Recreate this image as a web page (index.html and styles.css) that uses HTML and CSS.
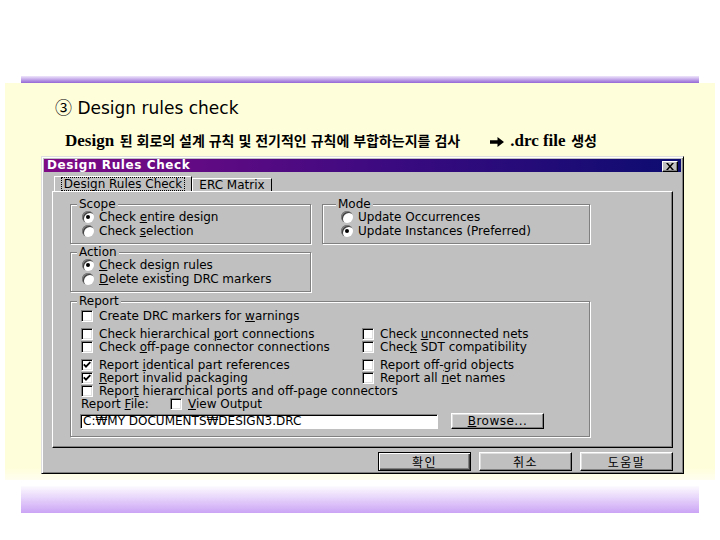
FILE: index.html
```html
<!DOCTYPE html>
<html lang="ko">
<head>
    <meta charset="UTF-8">
    <meta name="viewport" content="width=device-width, initial-scale=1.0">
    <title>Design rules check</title>
    <link rel="stylesheet" href="styles.css">
</head>
<body>
    <div class="top-bar"></div>

    <div class="slide">
        <h1 class="heading"><span class="num">③</span> Design rules check</h1>
        <p class="subtitle"><span class="en">Design</span> <span class="ko">된 회로의 설계 규칙 및 전기적인 규칙에 부합하는지를 검사</span><svg class="arrow" width="14" height="10" viewBox="0 0 14 10"><path d="M0 3.3h7.5V0L14 5l-6.5 5V6.7H0z" fill="#000"/></svg><span class="en">.drc file</span> <span class="ko">생성</span></p>

        <!-- Dialog -->
        <div class="dialog">
            <div class="titlebar">
                <span class="title">Design Rules Check</span>
                <span class="close-btn">
                    <svg width="8" height="7" viewBox="0 0 8 7"><path d="M0 0h2l2 2.4L6 0h2L5 3.5 8 7H6L4 4.6 2 7H0l3-3.5z" fill="#000"/></svg>
                </span>
            </div>

            <div class="tabs">
                <div class="tab active"><span class="focus">Design Rules Check</span></div>
                <div class="tab">ERC Matrix</div>
            </div>

            <div class="panel">
                <div class="top-row">
                    <div class="left-col">
                        <fieldset class="group scope">
                            <legend>Scope</legend>
                            <div class="opt"><span class="radio on"></span><span>Check <u>e</u>ntire design</span></div>
                            <div class="opt"><span class="radio"></span><span>Check <u>s</u>election</span></div>
                        </fieldset>
                        <fieldset class="group action">
                            <legend>Action</legend>
                            <div class="opt"><span class="radio on"></span><span><u>C</u>heck design rules</span></div>
                            <div class="opt"><span class="radio"></span><span><u>D</u>elete existing DRC markers</span></div>
                        </fieldset>
                    </div>
                    <fieldset class="group mode">
                        <legend>Mode</legend>
                        <div class="opt"><span class="radio"></span><span>Update Occurrences</span></div>
                        <div class="opt"><span class="radio on"></span><span>Update Instances (Preferred)</span></div>
                    </fieldset>
                </div>

                <fieldset class="group report">
                    <legend>Report</legend>
                    <div class="cb-row"><span class="check"></span><span>Create DRC markers for <u>w</u>arnings</span></div>

                    <div class="cb-grid">
                        <div class="cb-row"><span class="check"></span><span>Check hierarchical <u>p</u>ort connections</span></div>
                        <div class="cb-row"><span class="check"></span><span>Check <u>u</u>nconnected nets</span></div>
                        <div class="cb-row"><span class="check"></span><span>Check <u>o</u>ff-page connector connections</span></div>
                        <div class="cb-row"><span class="check"></span><span>Chec<u>k</u> SDT compatibility</span></div>
                    </div>

                    <div class="cb-grid">
                        <div class="cb-row"><span class="check on"><svg width="10" height="10" viewBox="0 0 10 10"><path d="M1.8 4.3l2.2 2.3 4.3-4.4" fill="none" stroke="#000" stroke-width="1.8"/></svg></span><span>Report <u>i</u>dentical part references</span></div>
                        <div class="cb-row"><span class="check"></span><span>Report off-<u>g</u>rid objects</span></div>
                        <div class="cb-row"><span class="check on"><svg width="10" height="10" viewBox="0 0 10 10"><path d="M1.8 4.3l2.2 2.3 4.3-4.4" fill="none" stroke="#000" stroke-width="1.8"/></svg></span><span><u>R</u>eport invalid packaging</span></div>
                        <div class="cb-row"><span class="check"></span><span>Report all <u>n</u>et names</span></div>
                    </div>

                    <div class="cb-row"><span class="check"></span><span>Repor<u>t</u> hierarchical ports and off-page connectors</span></div>

                    <div class="file-row">
                        <span class="file-label">Report <u>F</u>ile:</span>
                        <span class="check"></span><span><u>V</u>iew Output</span>
                    </div>

                    <div class="input-row">
                        <div class="text-input">C:₩MY DOCUMENTS₩DESIGN3.DRC</div>
                        <div class="btn browse"><span><u>B</u>rowse...</span></div>
                    </div>
                </fieldset>
            </div>

            <div class="buttons">
                <div class="btn default">확인</div>
                <div class="btn">취소</div>
                <div class="btn">도움말</div>
            </div>
        </div>
    </div>

    <div class="bottom-bar"></div>
</body>
</html>
```

FILE: styles.css
```css
* {
    box-sizing: border-box;
}

body {
    margin: 0;
    background: #fff;
    font-family: "DejaVu Sans", "Noto Sans CJK KR", sans-serif;
    color: #000;
}

/* slide decoration */
.top-bar {
    width: 678px;
    height: 7px;
    margin: 76px 0 0 21px;
    background: linear-gradient(#efe6fb, #9466d6);
}

.bottom-bar {
    width: 678px;
    height: 27px;
    margin: 6px 0 0 21px;
    background: linear-gradient(#fdfbff, #cba4f5);
}

.slide {
    margin: 0 5px;
    height: 397px;
    padding: 14px 0 0 36px;
    background: linear-gradient(#fffedb 97%, #fffef0);
}

.heading {
    margin: 0 0 0 14px;
    font-size: 17px;
    line-height: 20px;
    font-weight: normal;
}

.heading .num {
    font-family: "Noto Sans CJK KR", sans-serif;
}

.subtitle {
    margin: 12px 0 0 24px;
    line-height: 20px;
    font-weight: bold;
}

.subtitle .en {
    font-family: "Liberation Serif", serif;
    font-size: 17px;
}

.subtitle .ko {
    font-family: "Noto Sans CJK KR", sans-serif;
    font-size: 14px;
}

.subtitle .arrow {
    margin: 0 6px 0 30px;
    vertical-align: -1px;
}

/* dialog window */
.dialog {
    margin-top: 5px;
    width: 643px;
    padding: 2px;
    background: #c0c0c0;
    border: 1px solid;
    border-color: #dfdfdf #000 #000 #dfdfdf;
    box-shadow: inset 1px 1px 0 #fff, inset -1px -1px 0 #808080;
    font-size: 12px;
}

.titlebar {
    display: flex;
    align-items: center;
    justify-content: space-between;
    height: 13px;
    padding: 0 3px;
    background: linear-gradient(to right, #800a86, #3a0a80 55%, #0c0c70);
}

.titlebar .title {
    color: #fff;
    font-weight: bold;
    letter-spacing: 0.6px;
    line-height: 13px;
}

.close-btn {
    display: flex;
    align-items: center;
    justify-content: center;
    width: 16px;
    height: 11px;
    margin-top: 2px;
    background: #c0c0c0;
    border: 1px solid;
    border-color: #fff #000 #000 #fff;
    box-shadow: inset -1px -1px 0 #808080;
}

/* tabs */
.tabs {
    display: flex;
    align-items: flex-end;
    height: 15px;
    margin: 4px 8px 0;
    padding-left: 2px;
}

.tab {
    display: flex;
    align-items: center;
    justify-content: center;
    width: 80px;
    height: 13px;
    border-top: 1px solid #fff;
    border-left: 1px solid #fff;
    border-right: 1px solid #000;
    line-height: 12px;
}

.tab.active {
    width: 138px;
    height: 15px;
}

.tab .focus {
    padding: 0 2px;
    outline: 1px dotted #000;
}

.panel {
    margin: 0 8px;
    padding: 6px 0 10px 17px;
    border: 1px solid;
    border-color: #fff #000 #000 #fff;
    box-shadow: inset -1px -1px 0 #808080;
}

.top-row {
    display: flex;
    align-items: flex-start;
    gap: 11px;
}

.left-col {
    display: flex;
    flex-direction: column;
    gap: 2px;
    width: 241px;
}

/* group boxes */
.group {
    margin: 0;
    padding: 0 0 5px 11px;
    min-width: 0;
    border: 1px solid #808080;
    box-shadow: 1px 1px 0 #fff, inset 1px 1px 0 #fff;
}

.group legend {
    margin-left: -5px;
    padding: 0 2px;
    line-height: 12px;
    background: #c0c0c0;
}

.mode {
    width: 268px;
    padding-left: 18px;
}

.report {
    width: 520px;
    margin-top: 3px;
    padding: 2px 0 7px 10px;
}

.report legend {
    margin-left: -4px;
}

.opt {
    display: flex;
    align-items: center;
    gap: 5px;
    height: 14px;
    white-space: nowrap;
}

.radio {
    position: relative;
    flex: none;
    width: 12px;
    height: 12px;
    border-radius: 50%;
    background: #fff;
    box-shadow: inset 1px 1px 0 #808080, inset 2px 2px 0 #404040;
}

.radio.on::after {
    content: "";
    position: absolute;
    left: 4px;
    top: 4px;
    width: 4px;
    height: 4px;
    border-radius: 50%;
    background: #000;
}

.cb-row {
    display: flex;
    align-items: center;
    gap: 6px;
    height: 13px;
    white-space: nowrap;
}

.cb-grid {
    display: grid;
    grid-template-columns: 281px auto;
    margin-top: 5px;
}

.check {
    display: flex;
    flex: none;
    width: 12px;
    height: 12px;
    background: #fff;
    border: 1px solid;
    border-color: #808080 #fff #fff #808080;
    box-shadow: inset 1px 1px 0 #000, inset -1px -1px 0 #dfdfdf;
}

.check svg {
    display: block;
}

.file-row {
    display: flex;
    align-items: center;
    height: 13px;
}

.file-row .file-label {
    width: 89px;
}

.file-row .check {
    margin-right: 6px;
}

.input-row {
    display: flex;
    align-items: flex-start;
    margin-top: 4px;
}

.text-input {
    width: 358px;
    height: 15px;
    margin-left: -1px;
    padding-left: 2px;
    line-height: 13px;
    background: #fff;
    border: 1px solid;
    border-color: #808080 #fff #fff #808080;
    box-shadow: inset 1px 1px 0 #000;
}

/* buttons */
.btn {
    display: flex;
    align-items: center;
    justify-content: center;
    width: 93px;
    height: 19px;
    border: 1px solid;
    border-color: #fff #000 #000 #fff;
    box-shadow: inset -1px -1px 0 #808080, inset 1px 1px 0 #dfdfdf;
    letter-spacing: 1.5px;
}

.btn.browse {
    height: 16px;
    margin: -1px 0 0 13px;
    letter-spacing: 0.5px;
}

.btn.default {
    border-color: #000;
    box-shadow: inset 1px 1px 0 #fff, inset -1px -1px 0 #404040, inset -2px -2px 0 #808080;
}

.buttons {
    display: flex;
    justify-content: flex-end;
    gap: 8px;
    margin: 4px 8px 0;
}
```
